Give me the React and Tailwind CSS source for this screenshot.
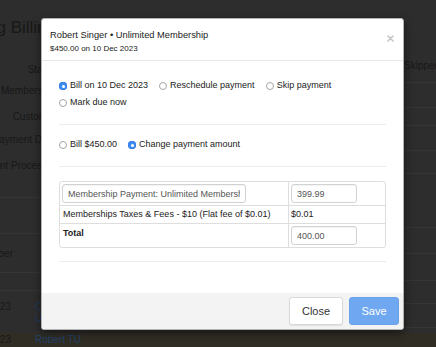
import React from 'react';

const Radio = ({ checked }) =>
  checked ? (
    <span className="mt-[2px] flex h-[8px] w-[8px] shrink-0 items-center justify-center rounded-full bg-[#3d8cf6] shadow-[inset_0_0_0_0.5px_#2b70d8]">
      <span className="h-[3px] w-[3px] rounded-full bg-white" />
    </span>
  ) : (
    <span className="mt-[2px] h-[8px] w-[8px] shrink-0 rounded-full border border-[#a6a6a6] bg-white" />
  );

const Option = ({ checked, label }) => (
  <label className="flex items-center gap-[3px] whitespace-nowrap">
    <Radio checked={checked} />
    <span>{label}</span>
  </label>
);

const FieldInput = ({ value, width }) => (
  <input
    readOnly
    value={value}
    className={`h-[19px] ${width} rounded-[3px] border border-[#d2d2d2] bg-white px-[5px] text-[9px] text-[#555] outline-none shadow-[inset_0_1px_1px_rgba(0,0,0,0.05)]`}
  />
);

const BackLabel = ({ children, className = '' }) => (
  <div className={`flex w-[56px] justify-end whitespace-nowrap text-[10px] leading-[12px] ${className}`}>
    {children}
  </div>
);

export default function App() {
  return (
    <div className="relative h-[347px] w-[436px] overflow-hidden bg-[#2d2d2d] font-['Liberation_Sans',Arial,sans-serif] text-[#181818]">
      {/* page behind the overlay */}
      <div className="flex h-[333px]">
        <div className="flex w-[404px] flex-col">
          <div className="flex w-[56px] justify-end whitespace-nowrap pt-[18px] text-[17px] leading-[20px]">
            Editing Billing
          </div>
          <BackLabel className="mt-[26px]">Status</BackLabel>
          <BackLabel className="mt-[9px]">Membership</BackLabel>
          <BackLabel className="mt-[14px]">Customer</BackLabel>
          <BackLabel className="mt-[11px]">Payment Date</BackLabel>
          <BackLabel className="mt-[14px]">Payment Processor</BackLabel>

          <div className="mt-[25px] h-[36px] border-t border-[#353535]" />
          <div className="flex h-[39px] items-center border-t border-[#353535]">
            <div className="flex w-[13px] justify-end whitespace-nowrap text-[10px]">Member</div>
          </div>
          <div className="h-[18px] border-t border-[#353535]" />
          <div className="flex h-[43px] border-t border-[#353535] pt-[10px] text-[10px] leading-[12px]">
            <div className="flex w-[11px] justify-end whitespace-nowrap">10 Dec 2023</div>
            <div className="ml-[24px] flex flex-col whitespace-nowrap text-[#1f3a5e]">
              <span>Charles Bobby</span>
              <span>Unlimited Membership</span>
            </div>
          </div>
        </div>
        <div className="flex w-[32px] flex-col">
          <div className="h-[82px] whitespace-nowrap pt-[60px] text-[10px] leading-[12px]">Skipped</div>
          <div className="h-[25px] border-t border-[#353535]" />
          <div className="h-[18px] border-t border-[#353535]" />
          <div className="h-[25px] border-t border-[#353535]" />
          <div className="h-[23px] border-t border-[#353535]" />
          <div className="h-[54px] border-t border-[#353535]" />
          <div className="h-[26px] border-t border-[#353535]" />
          <div className="h-[27px] border-t border-[#353535]" />
          <div className="h-[23px] border-t border-[#353535]" />
          <div className="h-[24px] border-t border-[#353535]" />
          <div className="flex-1 border-t border-[#353535]" />
        </div>
      </div>
      <div className="flex h-[14px] items-center bg-[#2f2d24] text-[10px] leading-[12px]">
        <div className="flex w-[11px] justify-end whitespace-nowrap">10 Dec 2023</div>
        <div className="ml-[24px] whitespace-nowrap text-[#23426a]">Robert TU</div>
      </div>

      {/* modal */}
      <div className="absolute left-[41px] top-[18px] flex h-[312px] w-[363px] flex-col overflow-hidden rounded-[3px] border border-[#b3b3b3] bg-white text-[#222] shadow-[0_3px_9px_rgba(0,0,0,0.5)]">
        <div className="flex items-start justify-between border-b border-[#e8e8e8] pb-[6px] pl-[8px] pr-[9px] pt-[10px]">
          <div>
            <div className="text-[9.3px] leading-[12px]">Robert Singer • Unlimited Membership</div>
            <div className="mt-[3px] text-[8px] leading-[10px]">$450.00 on 10 Dec 2023</div>
          </div>
          <svg className="mt-[6px]" width="7" height="7" viewBox="0 0 7 7">
            <path d="M1 1L6 6M6 1L1 6" stroke="#c4c4c4" strokeWidth="1.6" strokeLinecap="round" />
          </svg>
        </div>

        <div className="px-[17px] text-[9px]">
          <div className="flex flex-wrap gap-x-[11px] gap-y-[3px] border-b border-[#ececec] pb-[15px] pt-[17px] leading-[14px]">
            <Option checked label="Bill on 10 Dec 2023" />
            <Option label="Reschedule payment" />
            <Option label="Skip payment" />
            <Option label="Mark due now" />
          </div>
          <div className="flex gap-x-[11px] border-b border-[#ececec] pb-[15px] pt-[12px] leading-[14px]">
            <Option label="Bill $450.00" />
            <Option checked label="Change payment amount" />
          </div>
          <div className="border-b border-[#ececec] pb-[13px] pt-[14px]">
            <div className="overflow-hidden rounded-[3px] border border-[#dedede]">
              <div className="flex">
                <div className="w-[229px] border-r border-[#dedede] px-[2px] py-[2px]">
                  <FieldInput value="Membership Payment: Unlimited Membership" width="w-[184px]" />
                </div>
                <div className="flex-1 px-[2px] py-[2px]">
                  <FieldInput value="399.99" width="w-[66px]" />
                </div>
              </div>
              <div className="flex border-t border-[#dedede] leading-[17px]">
                <div className="w-[229px] whitespace-nowrap border-r border-[#dedede] pl-[3px]">
                  Memberships Taxes &amp; Fees - $10 (Flat fee of $0.01)
                </div>
                <div className="flex-1 pl-[2px]">$0.01</div>
              </div>
              <div className="flex border-t border-[#dedede]">
                <div className="w-[229px] border-r border-[#dedede] pl-[3px] pt-[3px] font-bold leading-[12px]">
                  Total
                </div>
                <div className="flex-1 px-[2px] py-[2px]">
                  <FieldInput value="400.00" width="w-[66px]" />
                </div>
              </div>
            </div>
          </div>
        </div>

        <div className="mt-auto flex h-[36px] items-center justify-end gap-[6px] bg-[#f3f3f3] pr-[4px]">
          <button className="h-[28px] w-[54px] rounded-[3px] border border-[#d9d9d9] bg-white text-[11px] text-[#333] shadow-[0_1px_1px_rgba(0,0,0,0.08)]">
            Close
          </button>
          <button className="h-[28px] w-[50px] rounded-[3px] border border-[#6aa2ea] bg-[#6fa8f0] text-[11px] text-white">
            Save
          </button>
        </div>
      </div>
    </div>
  );
}
